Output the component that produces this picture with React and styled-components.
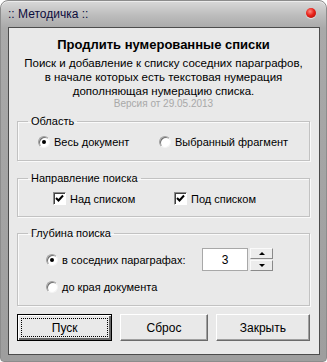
import React, { useState } from 'react';
import styled, { createGlobalStyle } from 'styled-components';

const GlobalStyle = createGlobalStyle`
  html, body { margin: 0; padding: 0; background: #ffffff; }
  body { font-family: "Liberation Sans", Arial, sans-serif; }
`;

const Window = styled.div`
  width: 327px;
  height: 362px;
  box-sizing: border-box;
  display: flex;
  flex-direction: column;
  padding: 0 6px 6px 7px;
  border-radius: 8px 8px 4px 4px;
  border: 1px solid #8c8c8c;
  background: linear-gradient(#d9d9d9 0px, #bdbdbd 14px, #a9a9a9 27px, #9e9e9e 100%);
  box-shadow: inset 0 1px 0 #ececec;
`;

const TitleBar = styled.div`
  height: 26px;
  display: flex;
  align-items: center;
  justify-content: space-between;
  padding: 0 4px 0 0;
`;

const Caption = styled.span`
  font-size: 12px;
  color: #0c0c3c;
  margin-top: -1px;
`;

const CloseDot = styled.span`
  width: 10px;
  height: 10px;
  border-radius: 50%;
  margin-top: -2px;
  background: radial-gradient(circle at 40% 35%, #ff8a80 0, #e8221a 45%, #a50b06 100%);
  box-shadow: 0 1px 1px rgba(255, 255, 255, 0.7);
`;

const Client = styled.div`
  flex: 1;
  display: flex;
  flex-direction: column;
  border: 1px solid #4c4c4c;
  background: #e9e9e9;
  padding: 9px 9px 0 8px;
  color: #000;
  font-size: 11px;
`;

const Heading = styled.div`
  font-weight: bold;
  font-size: 13px;
  line-height: 16px;
  text-align: center;
`;

const Description = styled.div`
  margin-top: 3px;
  font-size: 11.5px;
  line-height: 14px;
  text-align: center;
`;

const Version = styled.div`
  font-size: 10px;
  line-height: 12px;
  color: #a8a8a8;
  text-align: center;
`;

const Group = styled.fieldset`
  margin: ${p => p.$top}px 0 0 0;
  padding: 0;
  border: 1px solid #c2c2c2;
  box-shadow: inset 1px 1px 0 #fafafa, 1px 1px 0 #fafafa;
  min-width: 0;
`;

const Legend = styled.legend`
  margin-left: 10px;
  padding: 0 3px;
  font-size: 11px;
  line-height: 14px;
`;

const ChoiceRow = styled.div`
  display: grid;
  grid-template-columns: ${p => p.$cols};
  align-items: center;
  padding: ${p => p.$pad};
  height: ${p => p.$h}px;
`;

const Option = styled.label`
  display: flex;
  align-items: center;
  gap: 4px;
  font-size: 11px;
  line-height: 14px;
`;

const RadioCircle = styled.span`
  width: 12px;
  height: 12px;
  box-sizing: border-box;
  border-radius: 50%;
  background: #fff;
  border: 1px solid;
  border-color: #a0a0a0 #f4f4f4 #f4f4f4 #a0a0a0;
  box-shadow: inset 1px 1px 0 #707070;
  display: flex;
  align-items: center;
  justify-content: center;
  &::after {
    content: '';
    width: 4px;
    height: 4px;
    border-radius: 50%;
    background: ${p => (p.$on ? '#000' : 'transparent')};
  }
`;

const CheckBox = styled.span`
  width: 13px;
  height: 13px;
  box-sizing: border-box;
  background: #fff;
  border: 1px solid;
  border-color: #8c8c8c #ffffff #ffffff #8c8c8c;
  box-shadow: inset 1px 1px 0 #404040;
  display: flex;
  align-items: center;
  justify-content: center;
`;

const DepthRows = styled.div`
  display: flex;
  flex-direction: column;
  gap: 8px;
  padding: 8px 0 10px 28px;
`;

const DepthLine = styled.div`
  display: flex;
  align-items: center;
  height: ${p => p.$h}px;
`;

const Spinner = styled.div`
  display: flex;
  margin-left: auto;
  margin-right: 36px;
  gap: 2px;
`;

const SpinField = styled.div`
  width: 46px;
  height: 23px;
  box-sizing: border-box;
  border: 1px solid #a8a8a8;
  background: #fff;
  display: flex;
  align-items: center;
  justify-content: center;
  font-size: 12px;
`;

const SpinButtons = styled.div`
  display: flex;
  flex-direction: column;
  gap: 1px;
`;

const SpinButton = styled.div`
  width: 23px;
  height: 11px;
  box-sizing: border-box;
  background: #ececec;
  border: 1px solid;
  border-color: #fafafa #8a8a8a #8a8a8a #fafafa;
  display: flex;
  align-items: center;
  justify-content: center;
  &::after {
    content: '';
    border-left: 3px solid transparent;
    border-right: 3px solid transparent;
    ${p => (p.$up ? 'border-bottom: 3px solid #000;' : 'border-top: 3px solid #000;')}
  }
`;

const ButtonRow = styled.div`
  display: flex;
  gap: 8px;
  margin-top: 8px;
`;

const Button = styled.button`
  width: ${p => p.$w}px;
  height: 27px;
  box-sizing: border-box;
  padding: 0;
  font-family: "Liberation Sans", Arial, sans-serif;
  font-size: 12px;
  color: #000;
  background: #e9e9e9;
  border: 1px solid;
  border-color: #ffffff #6a6a6a #6a6a6a #ffffff;
  box-shadow: inset -1px -1px 0 #a0a0a0;
  ${p => p.$default && `
    border: 1px solid #000;
    box-shadow: inset 1px 1px 0 #fff, inset -2px -2px 0 #6a6a6a;
    outline: 1px dotted #000;
    outline-offset: -5px;
  `}
`;

const Check = () => (
  <svg width="9" height="9" viewBox="0 0 9 9">
    <path d="M1 4 L3.5 6.5 L8 1.5" fill="none" stroke="#000" strokeWidth="2" />
  </svg>
);

export default function App() {
  const [area, setArea] = useState('all');
  const [depth, setDepth] = useState('near');
  const [count, setCount] = useState(3);

  return (
    <>
      <GlobalStyle />
      <Window>
        <TitleBar>
          <Caption>:: Методичка ::</Caption>
          <CloseDot />
        </TitleBar>
        <Client>
          <Heading>Продлить нумерованные списки</Heading>
          <Description>
            Поиск и добавление к списку соседних параграфов,<br />
            в начале которых есть текстовая нумерация<br />
            дополняющая нумерацию списка.
          </Description>
          <Version>Версия от 29.05.2013</Version>

          <Group $top={4}>
            <Legend>Область</Legend>
            <ChoiceRow $cols="121px 1fr" $pad="6px 0 10px 20px" $h={16}>
              <Option onClick={() => setArea('all')}>
                <RadioCircle $on={area === 'all'} />
                Весь документ
              </Option>
              <Option onClick={() => setArea('sel')}>
                <RadioCircle $on={area === 'sel'} />
                Выбранный фрагмент
              </Option>
            </ChoiceRow>
          </Group>

          <Group $top={10}>
            <Legend>Направление поиска</Legend>
            <ChoiceRow $cols="121px 1fr" $pad="6px 0 10px 35px" $h={15}>
              <Option>
                <CheckBox><Check /></CheckBox>
                Над списком
              </Option>
              <Option>
                <CheckBox><Check /></CheckBox>
                Под списком
              </Option>
            </ChoiceRow>
          </Group>

          <Group $top={9}>
            <Legend>Глубина поиска</Legend>
            <DepthRows>
              <DepthLine $h={23}>
                <Option onClick={() => setDepth('near')}>
                  <RadioCircle $on={depth === 'near'} />
                  в соседних параграфах:
                </Option>
                <Spinner>
                  <SpinField>{count}</SpinField>
                  <SpinButtons>
                    <SpinButton $up onClick={() => setCount(count + 1)} />
                    <SpinButton onClick={() => setCount(Math.max(1, count - 1))} />
                  </SpinButtons>
                </Spinner>
              </DepthLine>
              <DepthLine $h={16}>
                <Option onClick={() => setDepth('end')}>
                  <RadioCircle $on={depth === 'end'} />
                  до края документа
                </Option>
              </DepthLine>
            </DepthRows>
          </Group>

          <ButtonRow>
            <Button $w={96} $default>Пуск</Button>
            <Button $w={88}>Сброс</Button>
            <Button $w={95}>Закрыть</Button>
          </ButtonRow>
        </Client>
      </Window>
    </>
  );
}
